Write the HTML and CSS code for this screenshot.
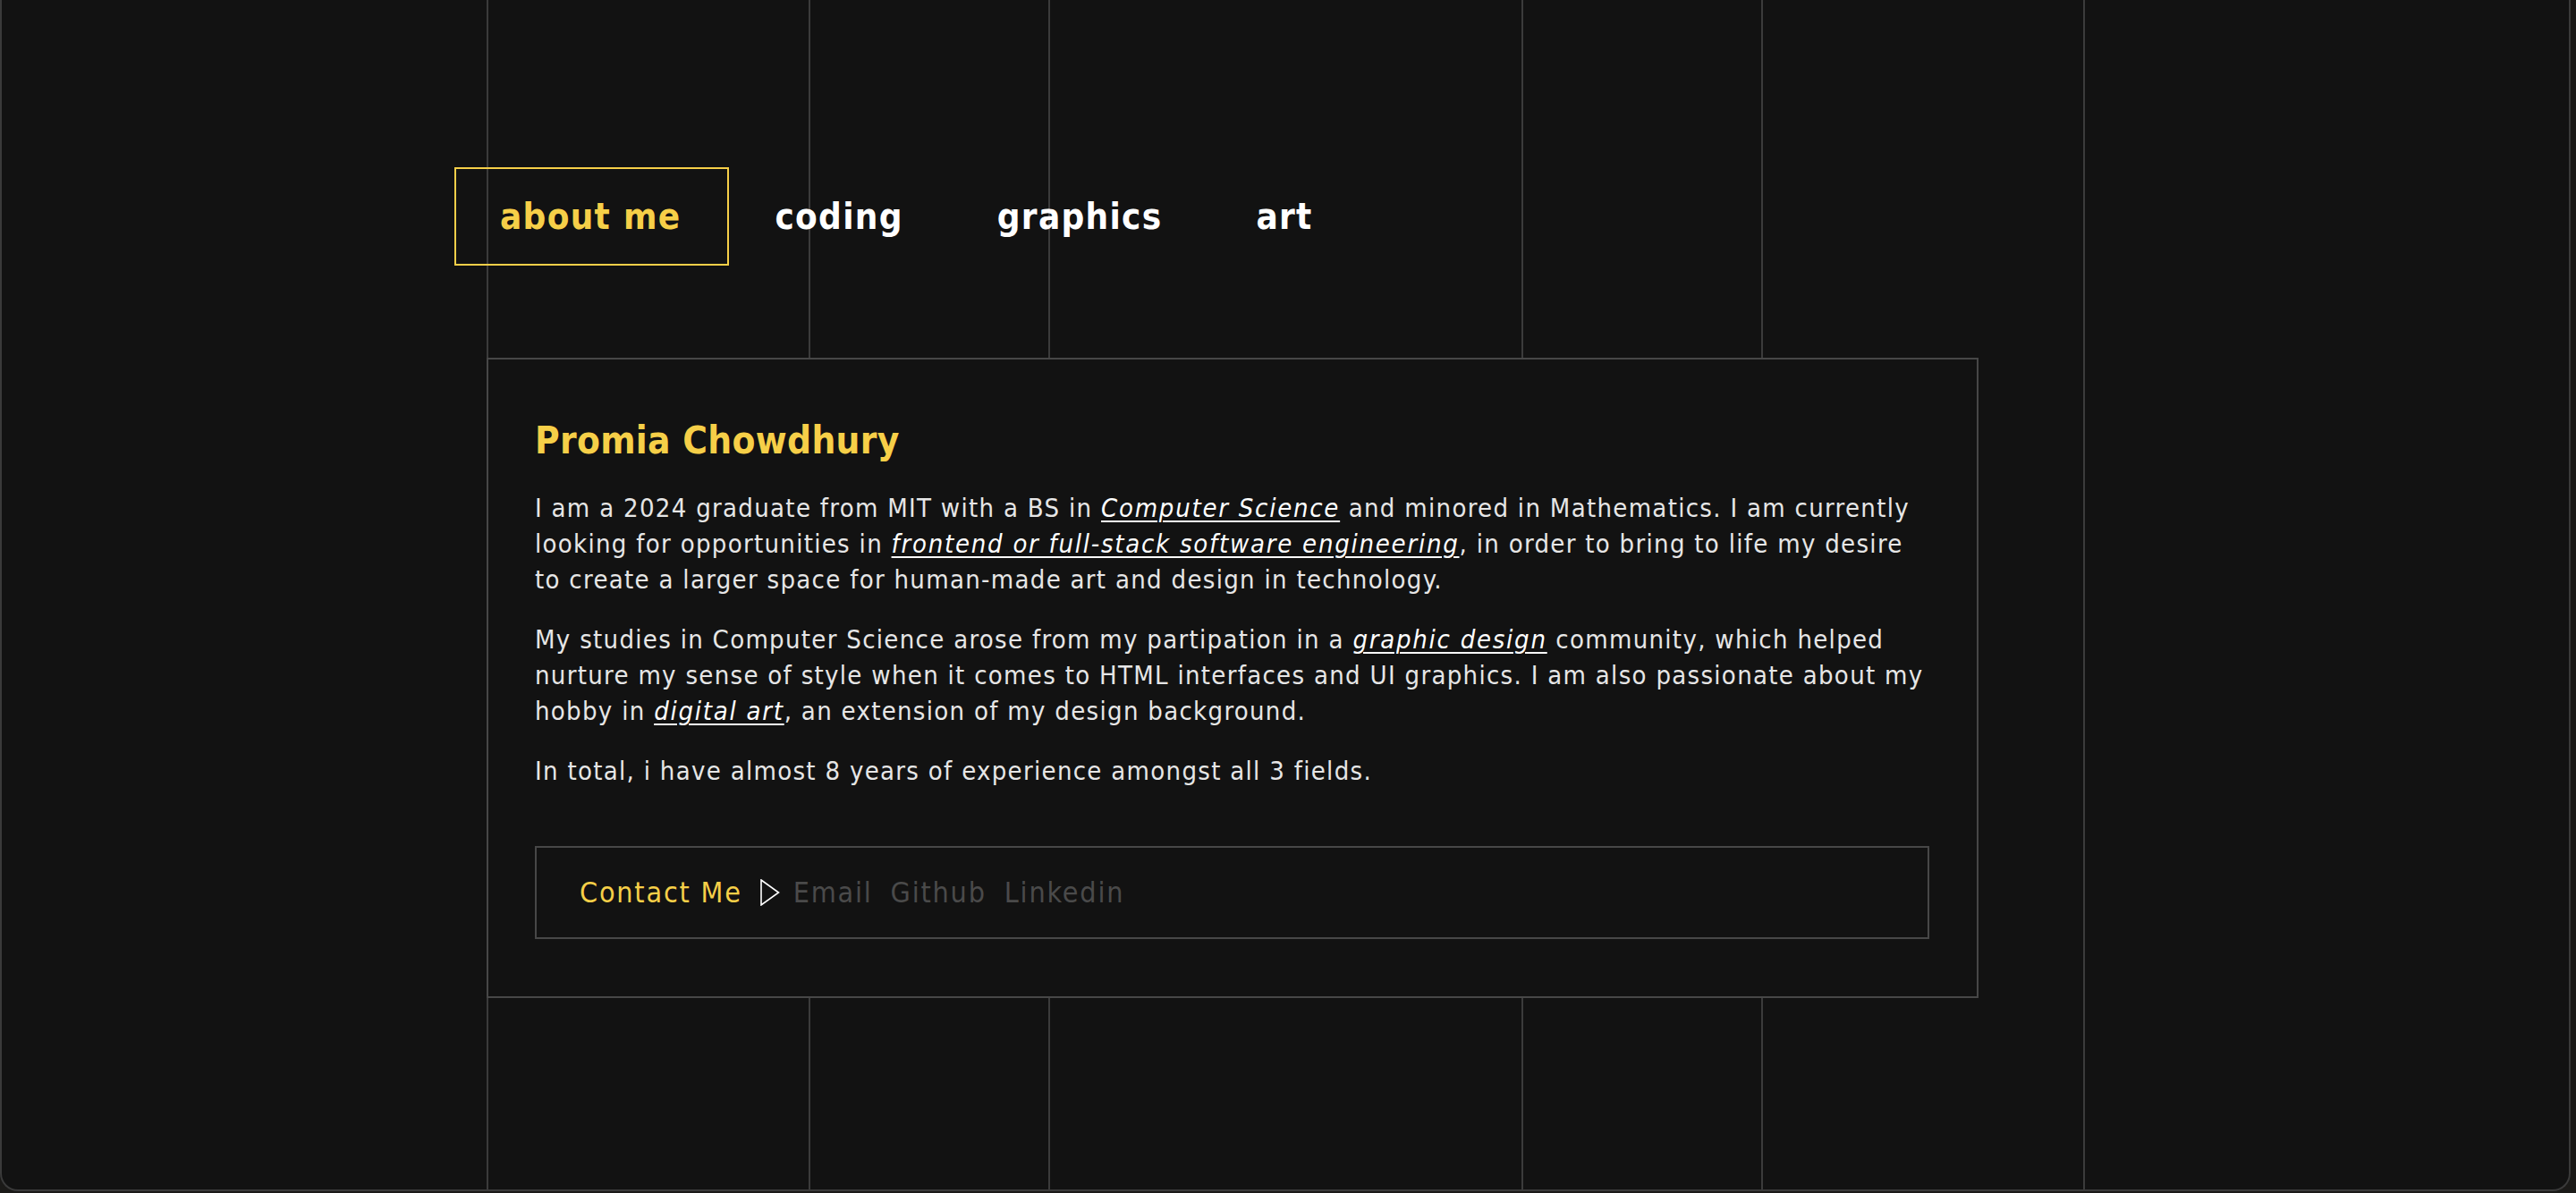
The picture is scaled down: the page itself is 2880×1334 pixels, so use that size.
FILE: index.html
```html
<!DOCTYPE html>
<html lang="en">
<head>
<meta charset="utf-8">
<title>Promia Chowdhury</title>
<link rel="stylesheet" href="styles.css">
</head>
<body>
<div class="window">
  <nav class="nav">
    <a class="nav-item active" href="#">about me</a>
    <a class="nav-item" href="#">coding</a>
    <a class="nav-item" href="#">graphics</a>
    <a class="nav-item" href="#">art</a>
  </nav>
  <main class="card">
    <h1 class="name">Promia Chowdhury</h1>
    <p class="text">I am a 2024 graduate from MIT with a BS in <a class="link" href="#">Computer Science</a> and minored in Mathematics. I am currently looking for opportunities in <a class="link" href="#">frontend or full-stack software engineering</a>, in order to bring to life my desire to create a larger space for human-made art and design in technology.</p>
    <p class="text">My studies in Computer Science arose from my partipation in a <a class="link" href="#">graphic design</a> community, which helped nurture my sense of style when it comes to HTML interfaces and UI graphics. I am also passionate about my hobby in <a class="link" href="#">digital art</a>, an extension of my design background.</p>
    <p class="text">In total, i have almost 8 years of experience amongst all 3 fields.</p>
    <div class="contact">
      <span class="contact-label">Contact Me</span>
      <svg class="arrow" width="22" height="30" viewBox="0 0 22 30"><path d="M1 1 L20.5 15 L1 29 Z" fill="none" stroke="#ffffff" stroke-width="1.6" stroke-linejoin="miter"/></svg>
      <a class="contact-link" href="#">Email</a>
      <a class="contact-link" href="#">Github</a>
      <a class="contact-link" href="#">Linkedin</a>
    </div>
  </main>
</div>
</body>
</html>
```

FILE: styles.css
```css
html, body {
  margin: 0;
  padding: 0;
}

body {
  background: #1b1a18;
  width: 2880px;
  height: 1334px;
  overflow: hidden;
  font-family: "DejaVu Sans Condensed", "DejaVu Sans", sans-serif;
  font-stretch: condensed;
}

.window {
  box-sizing: border-box;
  width: 2874px;
  height: 1332px;
  border: 2px solid #3a3a3a;
  border-top: none;
  border-radius: 0 0 20px 20px;
  background-color: #121212;
  background-image:
    linear-gradient(#3b3b3b, #3b3b3b),
    linear-gradient(#3b3b3b, #3b3b3b),
    linear-gradient(#3b3b3b, #3b3b3b),
    linear-gradient(#3b3b3b, #3b3b3b),
    linear-gradient(#3b3b3b, #3b3b3b),
    linear-gradient(#3b3b3b, #3b3b3b);
  background-size: 2px 100%;
  background-repeat: no-repeat;
  background-position: 542px 0, 902px 0, 1170px 0, 1699px 0, 1967px 0, 2327px 0;
  padding: 187px 0 0 506px;
}

.nav {
  display: flex;
  height: 110px;
}

.nav-item {
  box-sizing: border-box;
  height: 110px;
  display: flex;
  align-items: center;
  padding: 0 52px 0 49px;
  border: 2px solid transparent;
  color: #ffffff;
  text-decoration: none;
  font-weight: bold;
  font-size: 40px;
  letter-spacing: 1.3px;
}

.nav-item.active {
  color: #f6cf48;
  border-color: #f6cf48;
}

.card {
  box-sizing: border-box;
  display: block;
  width: 1668px;
  margin: 103px 0 0 36px;
  border: 2px solid #474747;
  background: #121212;
  padding: 66px 53px 64px 52px;
}

.name {
  margin: 0;
  font-size: 42px;
  line-height: 50px;
  font-weight: bold;
  color: #f6cf48;
  letter-spacing: 0.3px;
}

.text {
  margin: 27px 0 0;
  font-size: 29px;
  line-height: 40px;
  color: #e6e6e6;
  letter-spacing: 1.3px;
}

.name + .text {
  margin-top: 30px;
}

.link {
  color: #ffffff;
  font-style: italic;
  letter-spacing: 1.75px;
  text-decoration: underline;
  text-underline-offset: 4px;
  text-decoration-thickness: 2px;
}

.contact {
  box-sizing: border-box;
  height: 104px;
  margin-top: 64px;
  border: 2px solid #474747;
  display: flex;
  align-items: center;
  padding: 0 0 0 48px;
  font-size: 32px;
  letter-spacing: 1.8px;
}

.contact-label {
  color: #f6cf48;
}

.arrow {
  margin: 0 15px 0 20px;
  flex: none;
}

.contact-link {
  color: #4a4a4a;
  text-decoration: none;
  margin-right: 20px;
}
```
